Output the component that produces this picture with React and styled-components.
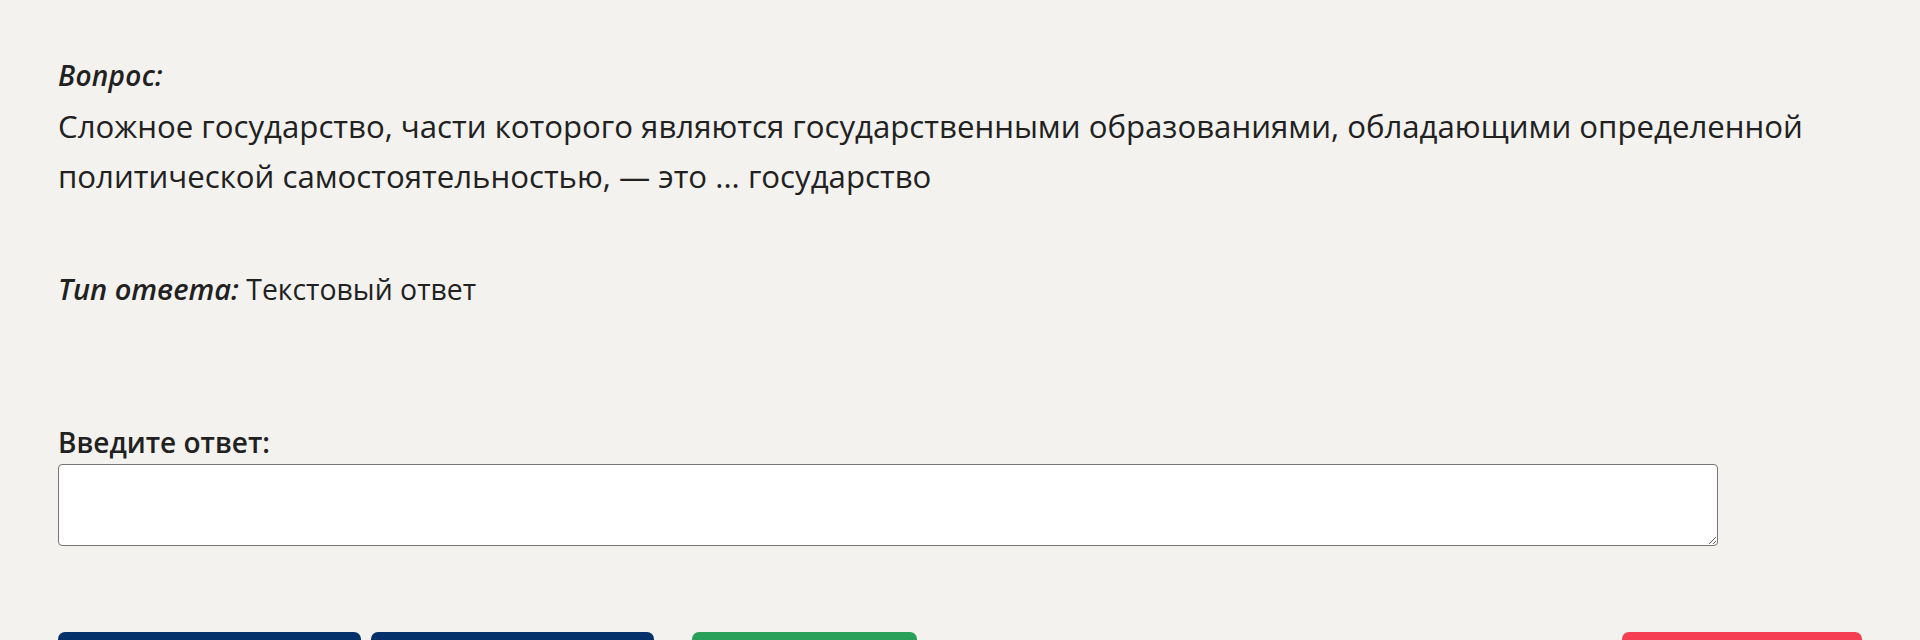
import React from "react";
import styled, { createGlobalStyle } from "styled-components";

const Global = createGlobalStyle`
  html, body { margin: 0; padding: 0; background: #f3f2ef; }
  body { font-family: "Open Sans", "Noto Sans", sans-serif; color: #212121; }
  * { box-sizing: border-box; }
`;

const Page = styled.main`
  padding: 55px 58px 40px 58px;
  display: flex;
  flex-direction: column;
`;

const Caption = styled.div`
  font-style: italic;
  font-weight: 600;
  font-size: 28px;
  line-height: 40px;
  letter-spacing: 0.3px;
`;

const QuestionText = styled.p`
  margin: 6px 0 0 0;
  font-size: 31.2px;
  line-height: 50px;
  font-weight: 400;
`;

const TypeLine = styled.p`
  margin: 68px 0 0 0;
  font-size: 28.4px;
  line-height: 40px;
`;

const TypeLabel = styled.span`
  font-style: italic;
  font-weight: 600;
  font-size: 29px;
`;

const AnswerBlock = styled.div`
  margin-top: 115px;
  display: flex;
  flex-direction: column;
  gap: 4px;
`;

const AnswerLabel = styled.label`
  font-size: 28px;
  font-weight: 600;
  line-height: 36px;
`;

const AnswerInput = styled.textarea`
  width: 1660px;
  height: 82px;
  border: 1px solid #767676;
  border-radius: 4px;
  background: #fff;
  font-family: inherit;
  font-size: 24px;
  padding: 8px 12px;
`;

const Actions = styled.div`
  margin-top: 86px;
  display: flex;
  align-items: center;
`;

const Group = styled.div`
  display: flex;
  gap: 10px;
`;

const Button = styled.button`
  width: ${(p) => p.$width}px;
  height: 52px;
  border: none;
  border-radius: 7px;
  color: #fff;
  font-family: inherit;
  font-size: 22px;
  font-weight: 600;
  background: ${(p) => p.$bg};
  margin-left: ${(p) => p.$ml || "0"};
`;

export default function App() {
  return (
    <>
      <Global />
      <Page>
        <Caption>Вопрос:</Caption>
        <QuestionText>
          Сложное государство, части которого являются государственными образованиями, обладающими определенной
          политической самостоятельностью, — это ... государство
        </QuestionText>
        <TypeLine>
          <TypeLabel>Тип ответа:</TypeLabel> Текстовый ответ
        </TypeLine>
        <AnswerBlock>
          <AnswerLabel htmlFor="answer">Введите ответ:</AnswerLabel>
          <AnswerInput id="answer" />
        </AnswerBlock>
        <Actions>
          <Group>
            <Button $bg="#04316a" $width={303}>Предыдущий вопрос</Button>
            <Button $bg="#04316a" $width={283}>Следующий вопрос</Button>
          </Group>
          <Button $bg="#28a05a" $width={225} $ml="38px">Ответить</Button>
          <Button $bg="#f63e52" $width={240} $ml="auto">Завершить тест</Button>
        </Actions>
      </Page>
    </>
  );
}
